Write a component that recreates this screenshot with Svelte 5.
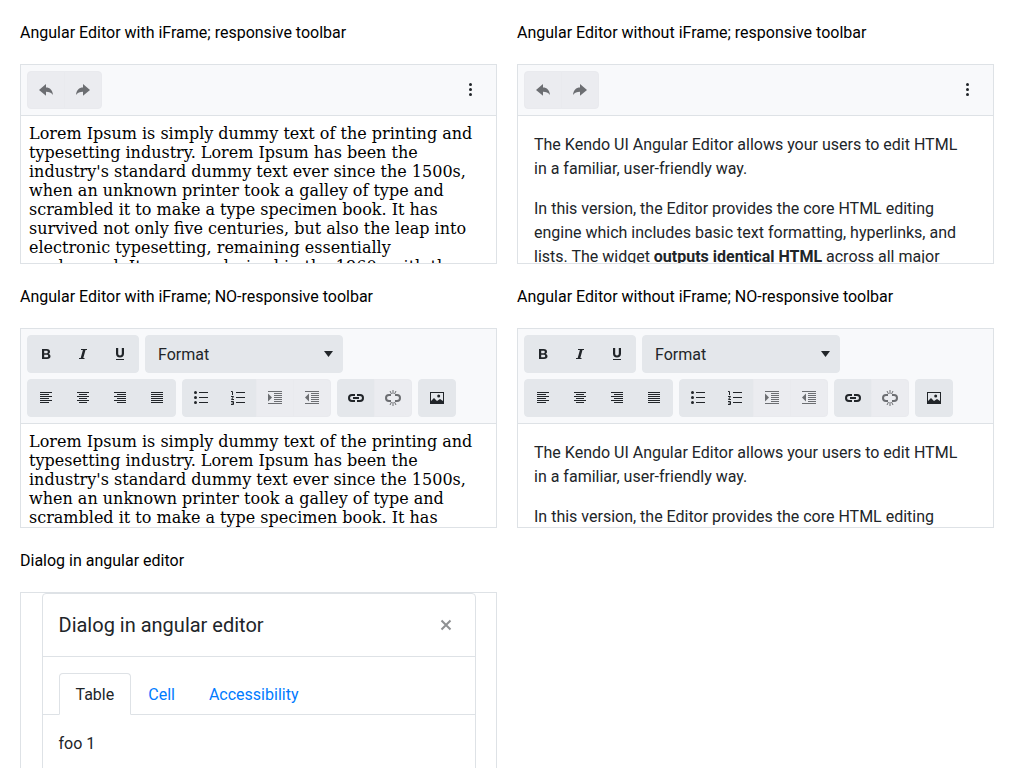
<script>
  const lorem =
    "Lorem Ipsum is simply dummy text of the printing and typesetting industry. Lorem Ipsum has been the industry's standard dummy text ever since the 1500s, when an unknown printer took a galley of type and scrambled it to make a type specimen book. It has survived not only five centuries, but also the leap into electronic typesetting, remaining essentially unchanged. It was popularised in the 1960s with the release of Letraset sheets containing Lorem Ipsum passages.";

  const editors = [
    { title: 'Angular Editor with iFrame; responsive toolbar', frame: true, responsive: true },
    { title: 'Angular Editor without iFrame; responsive toolbar', frame: false, responsive: true },
    { title: 'Angular Editor with iFrame; NO-responsive toolbar', frame: true, responsive: false },
    { title: 'Angular Editor without iFrame; NO-responsive toolbar', frame: false, responsive: false }
  ];

  const history = [
    { icon: 'undo', label: 'Undo', disabled: true },
    { icon: 'redo', label: 'Redo', disabled: true }
  ];
  const styles = [
    { icon: 'bold', label: 'Bold' },
    { icon: 'italic', label: 'Italic' },
    { icon: 'underline', label: 'Underline' }
  ];
  const groups = [
    [
      { icon: 'left', label: 'Align left' },
      { icon: 'center', label: 'Align center' },
      { icon: 'right', label: 'Align right' },
      { icon: 'justify', label: 'Justify' }
    ],
    [
      { icon: 'bullets', label: 'Insert unordered list' },
      { icon: 'numbers', label: 'Insert ordered list' },
      { icon: 'indent', label: 'Indent', disabled: true },
      { icon: 'outdent', label: 'Outdent', disabled: true }
    ],
    [
      { icon: 'link', label: 'Insert link' },
      { icon: 'unlink', label: 'Remove link', disabled: true }
    ],
    [{ icon: 'image', label: 'Insert image' }]
  ];

  const paths = {
    undo: 'M8 2v3.500c4 0 6.500 2.500 7 7.500-1.500-2.300-4-3.200-7-3.200v3.900L1 8z',
    redo: 'M8 2v3.500c-4 0-6.500 2.500-7 7.500 1.500-2.300 4-3.200 7-3.200v3.900L15 8z',
    bold: 'M4 3h4.600C11 3 12 4.100 12 5.700c0 1.100-.5 1.800-1.400 2.200 1.200.3 1.900 1.200 1.900 2.400C12.500 12 11.300 13 9 13H4zM6.200 4.700v2.500h2c1.100 0 1.600-.4 1.600-1.300 0-.8-.5-1.200-1.500-1.200zM6.200 8.800v2.500h2.300c1.100 0 1.700-.4 1.700-1.300 0-.8-.6-1.200-1.800-1.200z',
    italic: 'M6 3h6v1h-1.500L8.300 12H9.500v1H4v-1h1.700L7.900 4H6z',
    underline: 'M4 2h2.200v5.600c0 1.300.6 2 1.800 2s1.800-.7 1.800-2V2H12v5.700c0 2.300-1.500 3.700-4 3.700S4 10 4 7.700zM4 13h8v1H4z',
    left: 'M2 2h12v1H2zM2 4h9v1H2zM2 6h12v1H2zM2 8h9v1H2zM2 10h12v1H2zM2 12h9v1H2z',
    center: 'M2 2h12v1H2zM4 4h8v1H4zM2 6h12v1H2zM4 8h8v1H4zM2 10h12v1H2zM4 12h8v1H4z',
    right: 'M2 2h12v1H2zM5 4h9v1H5zM2 6h12v1H2zM5 8h9v1H5zM2 10h12v1H2zM5 12h9v1H5z',
    justify: 'M2 2h12v1H2zM2 4h12v1H2zM2 6h12v1H2zM2 8h12v1H2zM2 10h12v1H2zM2 12h12v1H2z',
    indent: 'M1 1h14v1H1zM7 3h8v1H7zM7 5h8v1H7zM7 7h8v1H7zM7 9h8v1H7zM7 11h8v1H7zM1 13h14v1H1zM1 3.500l4 4-4 4z',
    outdent: 'M1 1h14v1H1zM7 3h8v1H7zM7 5h8v1H7zM7 7h8v1H7zM7 9h8v1H7zM7 11h8v1H7zM1 13h14v1H1zM5 3.500v8l-4-4z',
    image: 'M1 2h14v12H1zM2 3v8l3-3 3 3 3-2 3 2V3z'
  };
</script>

{#snippet glyph(name)}
  <svg class="icon" viewBox="0 0 16 16" aria-hidden="true">
    {#if name === 'bullets'}
      <path d="M6 2h9v1H6zM6 7h9v1H6zM6 12h9v1H6z" />
      <circle cx="2.500" cy="2.500" r="1.500" /><circle cx="2.500" cy="7.500" r="1.500" /><circle cx="2.500" cy="12.500" r="1.500" />
    {:else if name === 'numbers'}
      <path d="M6 2h9v1H6zM6 7h9v1H6zM6 12h9v1H6z" />
      <path class="line" d="M1 1.500h1.500V5M1 6.500h2.500L1.500 9.500H4M1 11.500h2.500v3H1M1.500 13h2" />
    {:else if name === 'link'}
      <path class="thick" d="M7 5H4a3 3 0 0 0 0 6h3M9 5h3a3 3 0 0 1 0 6H9M5 8h6" />
    {:else if name === 'unlink'}
      <path class="thick" d="M6 5H4a3 3 0 0 0 0 6h2M10 5h2a3 3 0 0 1 0 6h-2" />
      <path class="line" d="M8 0v4M8 12v4M5 1l1.500 3M11 1L9.500 4M5 15l1.500-3M11 15l-1.500-3" />
    {:else if name === 'image'}
      <path fill-rule="evenodd" d={paths.image} /><circle cx="9.700" cy="6" r="1.500" />
    {:else if name === 'more'}
      <circle cx="7.500" cy="2.500" r="1.500" /><circle cx="7.500" cy="7.500" r="1.500" /><circle cx="7.500" cy="12.500" r="1.500" />
    {:else if name === 'close'}
      <path class="cross" d="M3.500 3.500l9 9M12.500 3.500l-9 9" />
    {:else}
      <path fill-rule="evenodd" d={paths[name]} />
    {/if}
  </svg>
{/snippet}

{#snippet buttons(items)}
  <div class="group">
    {#each items as item}
      <button type="button" aria-label={item.label} disabled={item.disabled}>{@render glyph(item.icon)}</button>
    {/each}
  </div>
{/snippet}

<main>
  {#each editors as editor}
    <section>
      <h2>{editor.title}</h2>
      <div class="editor">
        <div class="toolbar">
          {#if editor.responsive}
            {@render buttons(history)}
            <button type="button" class="more" aria-label="More tools">{@render glyph('more')}</button>
          {:else}
            {@render buttons(styles)}
            <div class="format">
              <select aria-label="Format"><option>Format</option></select>
              <svg class="caret" viewBox="0 0 9 6" aria-hidden="true"><path d="M0 0h9L4.500 6z" /></svg>
            </div>
            {#each groups as group}
              {@render buttons(group)}
            {/each}
          {/if}
        </div>
        {#if editor.frame}
          <div class="content framed">{lorem}</div>
        {:else}
          <div class="content">
            <p>The Kendo UI Angular Editor allows your users to edit HTML in a familiar, user-friendly way.</p>
            <p>
              In this version, the Editor provides the core HTML editing engine which includes basic text formatting,
              hyperlinks, and lists. The widget <strong>outputs identical HTML</strong> across all major browsers.
            </p>
          </div>
        {/if}
      </div>
    </section>
  {/each}

  <section>
    <h2>Dialog in angular editor</h2>
    <div class="editor">
      <div class="dialog" role="dialog" aria-labelledby="dialog-title">
        <header>
          <h3 id="dialog-title">Dialog in angular editor</h3>
          <button type="button" class="close" aria-label="Close">{@render glyph('close')}</button>
        </header>
        <div class="tabs" role="tablist">
          <button type="button" role="tab" aria-selected="true">Table</button>
          <button type="button" role="tab" aria-selected="false">Cell</button>
          <button type="button" role="tab" aria-selected="false">Accessibility</button>
        </div>
        <div class="panel" role="tabpanel">foo 1</div>
      </div>
    </div>
  </section>
</main>

<style>
  main {
    display: grid;
    grid-template-columns: 1fr 1fr;
    column-gap: 20px;
    padding: 0 30px 0 20px;
    font: 16px/24px Roboto, sans-serif;
    color: #212529;
  }
  main, main * { box-sizing: border-box; }
  section { min-width: 0; }
  h2 {
    margin: 0;
    padding: 21px 0 19px;
    font-size: 16px;
    line-height: 24px;
    font-weight: 400;
    color: #000;
  }
  .editor {
    display: flex;
    flex-direction: column;
    height: 200px;
    border: 1px solid #dee2e6;
    overflow: hidden;
  }
  .toolbar {
    display: flex;
    flex-wrap: wrap;
    flex-shrink: 0;
    gap: 6px;
    padding: 6px;
    background: #f8f9fb;
    border-bottom: 1px solid #dee2e6;
  }
  button {
    margin: 0;
    border: 0;
    background: none;
    font: inherit;
    color: inherit;
  }
  .group { display: flex; }
  .group button, .more {
    display: flex;
    align-items: center;
    justify-content: center;
    width: 38px;
    height: 38px;
    padding: 0;
    border: 1px solid #e4e7eb;
    background: #e4e7eb;
    color: #212529;
  }
  .group button + button { margin-left: -1px; }
  .group button:first-child { border-radius: 4px 0 0 4px; }
  .group button:last-child { border-radius: 0 4px 4px 0; }
  .group button:only-child { border-radius: 4px; }
  .group button:disabled {
    border-color: #e9eaee;
    background: #ebecf0;
    color: #6c6e72;
  }
  .toolbar .more {
    margin-left: auto;
    border-color: transparent;
    background: none;
  }
  .icon {
    width: 16px;
    height: 16px;
    fill: currentColor;
  }
  .line, .thick, .cross { fill: none; stroke: currentColor; }
  .thick, .cross { stroke-width: 2; }
  .format {
    display: flex;
    position: relative;
    width: 198px;
    height: 38px;
  }
  select {
    flex: 1;
    appearance: none;
    padding: 1px 12px 0;
    border: 1px solid #e4e7eb;
    border-radius: 4px;
    background: #e4e7eb;
    font: inherit;
    color: inherit;
  }
  .caret {
    position: absolute;
    top: 16px;
    right: 10px;
    width: 9px;
    height: 6px;
    fill: #212529;
    pointer-events: none;
  }
  .content {
    flex: 1;
    min-height: 0;
    padding: 17px 31px 0 16px;
    overflow: hidden;
  }
  .content p { margin: 0 0 16px; }
  .framed {
    padding: 8px 8px 0;
    font: 16px/19px "DejaVu Serif", serif;
    color: #000;
  }
  .dialog {
    flex-shrink: 0;
    width: calc(100% - 41px);
    margin: 0 auto;
    border: 1px solid #dee2e6;
    border-radius: 4px;
  }
  header {
    display: flex;
    align-items: center;
    justify-content: space-between;
    padding: 16px;
    border-bottom: 1px solid #dee2e6;
  }
  h3 {
    margin: 0;
    font-size: 20px;
    line-height: 30px;
    font-weight: 400;
  }
  .close {
    display: flex;
    padding: 5px;
    opacity: .5;
  }
  .tabs {
    display: flex;
    padding: 16px 16px 0;
    border-bottom: 1px solid #dee2e6;
  }
  .tabs button {
    margin-bottom: -1px;
    padding: 9px 16px 7px;
    border: 1px solid transparent;
    border-radius: 4px 4px 0 0;
    color: #007bff;
  }
  .tabs button[aria-selected="true"] {
    border-color: #dee2e6 #dee2e6 #fff;
    background: #fff;
    color: #212529;
  }
  .panel { padding: 17px 16px 16px; }
</style>
